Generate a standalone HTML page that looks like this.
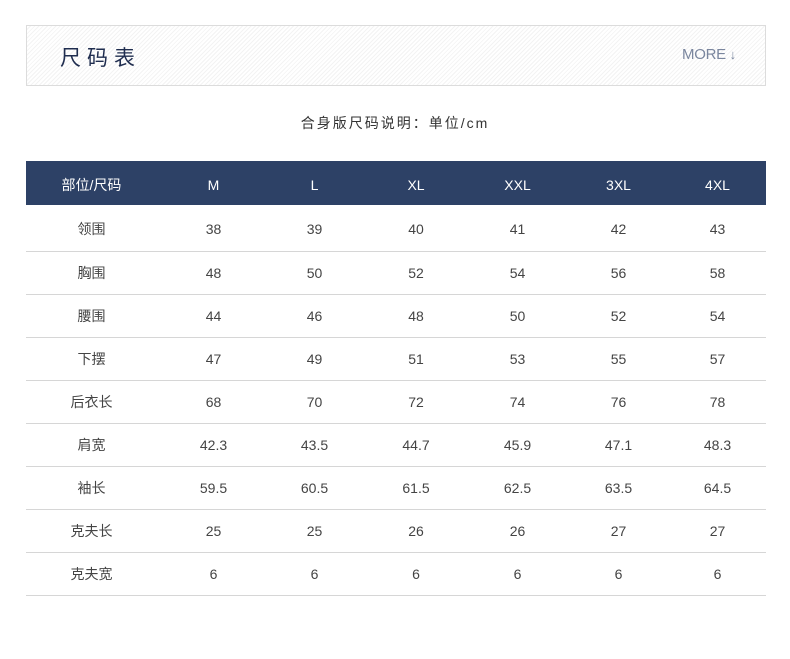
<!DOCTYPE html>
<html><head><meta charset="utf-8"><style>
body{margin:0;background:#fff;width:790px;height:659px;font-family:"Liberation Sans","Noto Sans CJK SC",sans-serif;position:relative;overflow:hidden}
.box{position:absolute;left:26px;top:25px;width:738px;height:59px;border:1px solid #dcdcdc;background:repeating-linear-gradient(135deg,#fff 0,#fff 2px,#f3f3f3 2px,#f3f3f3 3px)}
.t{position:absolute;left:33px;top:16px;font-size:21px;color:#1f2d4f;letter-spacing:6px}
.m{position:absolute;left:655px;top:20px;font-size:15px;color:#7a869e;letter-spacing:-0.3px}
.sub{position:absolute;top:113px;left:0;width:790px;text-align:center;font-size:14px;color:#333;letter-spacing:2px}
table{position:absolute;left:26px;top:161px;border-collapse:collapse;width:740px;table-layout:fixed}
td{text-align:center;font-size:14px;color:#444;height:42px;border-bottom:1px solid #d6d6d6;padding:0}
td:first-child{padding-right:6px}
tr.h td{background:#2d4166;color:#fff;height:41px;padding-top:3px;border:none}
tr.f td{height:44px;padding-top:2px}
</style></head><body>
<div class="box"><div class="t">尺码表</div><div class="m">MORE <span style="font-size:13px">↓</span></div></div>
<div class="sub">合身版尺码说明：单位/cm</div>
<table>
<colgroup><col style="width:137px"><col style="width:101px"><col style="width:101px"><col style="width:102px"><col style="width:101px"><col style="width:101px"><col style="width:97px"></colgroup>
<tr class="h"><td>部位/尺码</td><td>M</td><td>L</td><td>XL</td><td>XXL</td><td>3XL</td><td>4XL</td></tr>
<tr class="f"><td>领围</td><td>38</td><td>39</td><td>40</td><td>41</td><td>42</td><td>43</td></tr>
<tr><td>胸围</td><td>48</td><td>50</td><td>52</td><td>54</td><td>56</td><td>58</td></tr>
<tr><td>腰围</td><td>44</td><td>46</td><td>48</td><td>50</td><td>52</td><td>54</td></tr>
<tr><td>下摆</td><td>47</td><td>49</td><td>51</td><td>53</td><td>55</td><td>57</td></tr>
<tr><td>后衣长</td><td>68</td><td>70</td><td>72</td><td>74</td><td>76</td><td>78</td></tr>
<tr><td>肩宽</td><td>42.3</td><td>43.5</td><td>44.7</td><td>45.9</td><td>47.1</td><td>48.3</td></tr>
<tr><td>袖长</td><td>59.5</td><td>60.5</td><td>61.5</td><td>62.5</td><td>63.5</td><td>64.5</td></tr>
<tr><td>克夫长</td><td>25</td><td>25</td><td>26</td><td>26</td><td>27</td><td>27</td></tr>
<tr><td>克夫宽</td><td>6</td><td>6</td><td>6</td><td>6</td><td>6</td><td>6</td></tr>
</table>
</body></html>
